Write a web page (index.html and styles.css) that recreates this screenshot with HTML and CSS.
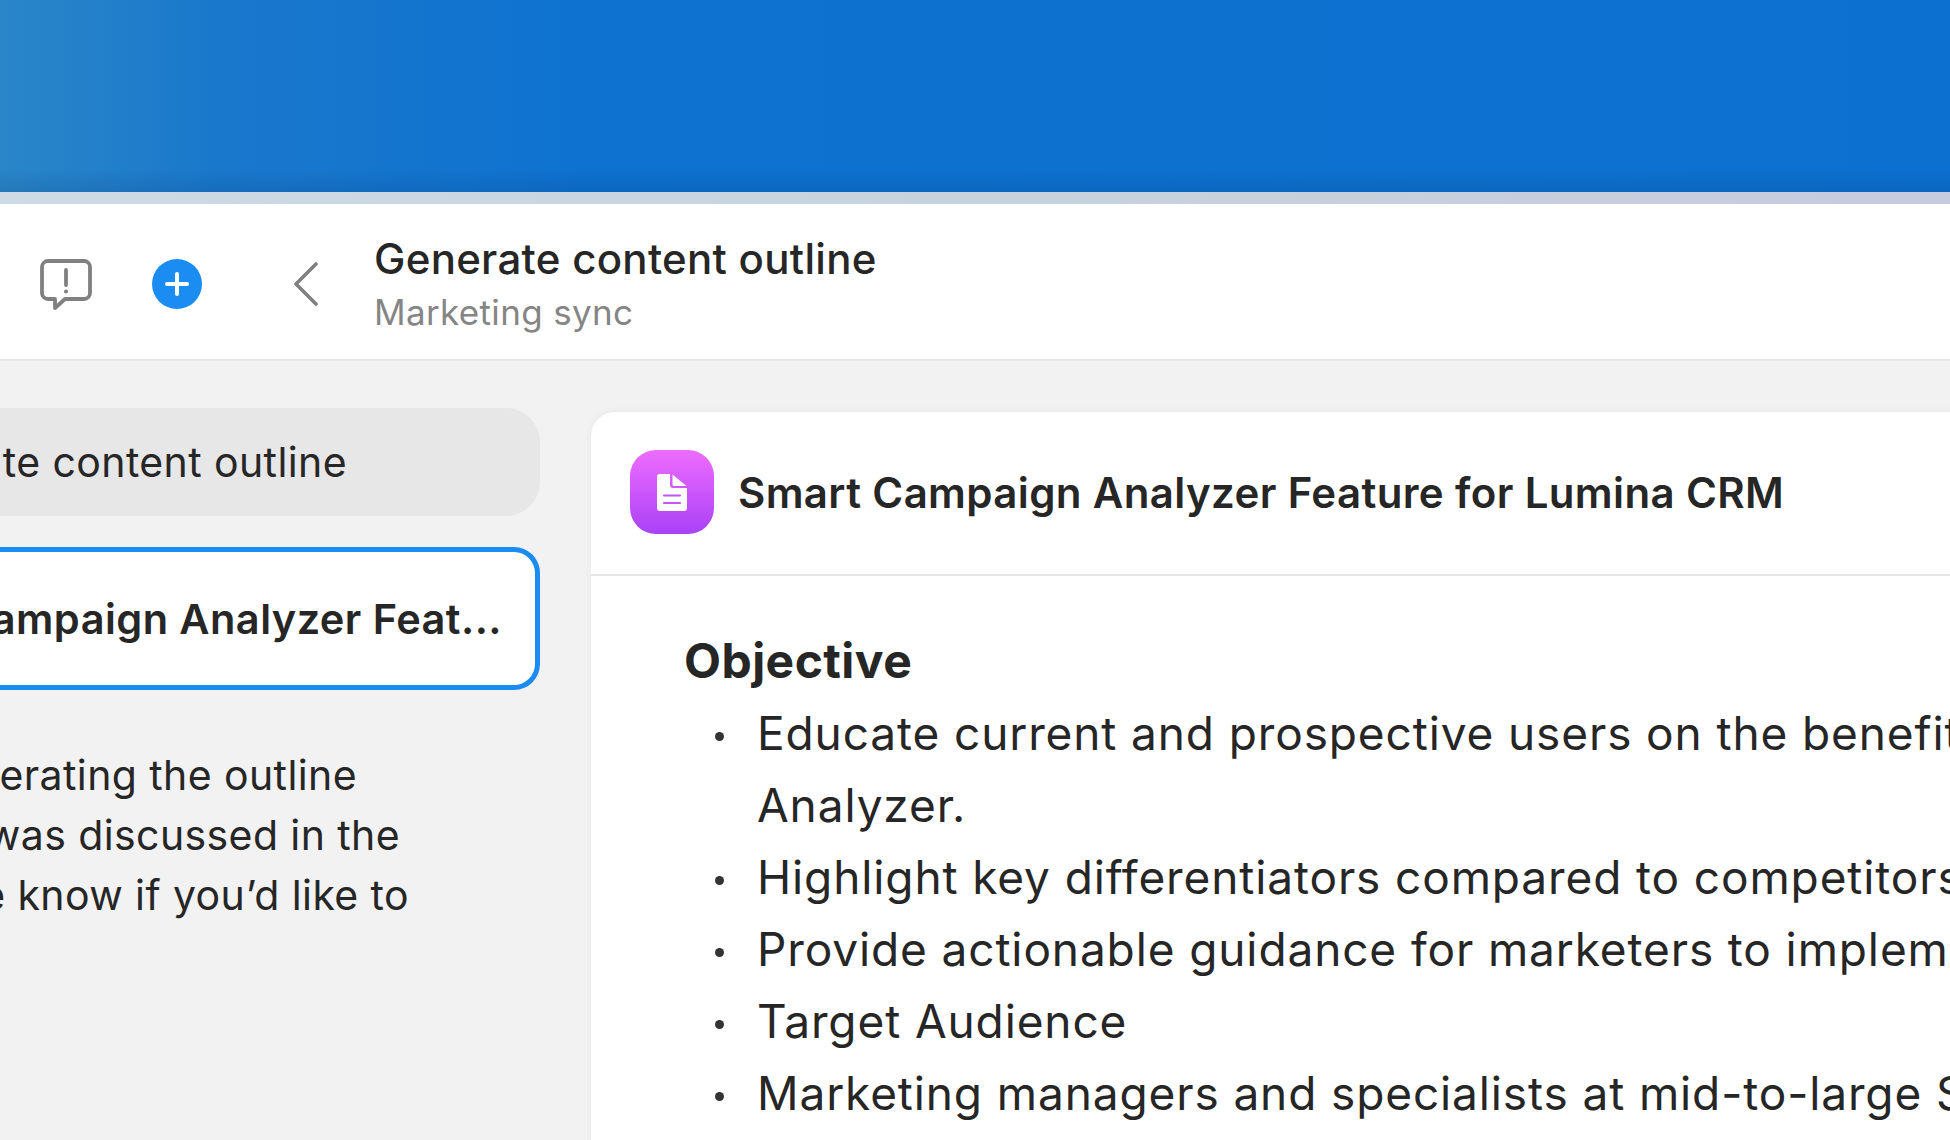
FILE: index.html
```html
<!DOCTYPE html>
<html lang="en">
<head>
<meta charset="utf-8">
<title>Generate content outline</title>
<link rel="stylesheet" href="styles.css">
</head>
<body>
<div class="hero"></div>
<div class="band"></div>
<header class="topbar">
  <svg class="ic-feedback" viewBox="0 0 54 54" width="54" height="54" fill="none" stroke="#808080" stroke-width="3.8" stroke-linejoin="round" stroke-linecap="round">
    <path d="M9 3h36a6 6 0 0 1 6 6v26a6 6 0 0 1-6 6H26l-10 9v-9H9a6 6 0 0 1-6-6V9a6 6 0 0 1 6-6z"/>
    <path d="M27 12v15"/>
    <circle cx="27" cy="33.5" r="1.2" fill="#808080" stroke-width="1.6"/>
  </svg>
  <svg class="ic-plus" viewBox="0 0 50 50" width="50" height="50">
    <circle cx="25" cy="25" r="25" fill="#1a8cf2"/>
    <path d="M25 15v20M15 25h20" stroke="#fff" stroke-width="4" stroke-linecap="round"/>
  </svg>
  <svg class="ic-back" viewBox="0 0 26 44" width="26" height="44" fill="none" stroke="#808080" stroke-width="3.6" stroke-linecap="round" stroke-linejoin="round">
    <path d="M23 2 3 22l20 20"/>
  </svg>
  <div class="titles">
    <div class="title">Generate content outline</div>
    <div class="subtitle">Marketing sync</div>
  </div>
</header>
<main class="workspace">
  <aside class="chat">
    <div class="pill"><span>Generate content outline</span></div>
    <div class="doc-link"><span>Smart Campaign Analyzer Feat...</span></div>
    <div class="reply">
      <div class="reply-line line-a"><span>I’ve finished generating the outline</span></div>
      <div class="reply-line line-b"><span>based on what was discussed in the</span></div>
      <div class="reply-line"><span>meeting. Please let me know if you’d like to</span></div>
    </div>
  </aside>
  <section class="doc">
    <div class="doc-head">
      <div class="doc-icon">
        <svg viewBox="0 0 30 37" width="30" height="37">
          <path d="M3 0h10v10.5a3.5 3.5 0 0 0 3.5 3.5H30v20a3 3 0 0 1-3 3H3a3 3 0 0 1-3-3V3a3 3 0 0 1 3-3z" fill="#fff"/>
          <path d="M15.5.5 29.5 12H17a1.5 1.5 0 0 1-1.5-1.5z" fill="#fff"/>
          <path d="M7 21.5h16M7 29h16" stroke="#c455f5" stroke-width="2.2" stroke-linecap="round"/>
        </svg>
      </div>
      <h1 class="doc-title">Smart Campaign Analyzer Feature for Lumina CRM</h1>
    </div>
    <div class="doc-body">
      <h2 class="section">Objective</h2>
      <ul class="points">
        <li>Educate current and prospective users on the benefits of the Smart Campaign<br>Analyzer.</li>
        <li>Highlight key differentiators compared to competitors.</li>
        <li>Provide actionable guidance for marketers to implement campaigns.</li>
        <li>Target Audience</li>
        <li>Marketing managers and specialists at mid-to-large SaaS companies.</li>
      </ul>
    </div>
  </section>
</main>
</body>
</html>
```
FILE: styles.css
```css
* { box-sizing: border-box; }
html, body { margin: 0; padding: 0; }
body {
  width: 1950px;
  height: 1140px;
  overflow: hidden;
  background: #f2f2f2;
  color: #262626;
  font-family: Inter, "Noto Sans", sans-serif;
}
.hero {
  height: 192px;
  background:
    linear-gradient(180deg, rgba(0,40,90,0) 88%, rgba(0,40,90,.14) 100%),
    linear-gradient(90deg, #2a86c8 0%, #1a78cc 11%, #0e72d0 30%, #0c70d0 100%);
}
.band {
  height: 12px;
  background: linear-gradient(90deg, #cfdbe4 0%, #c6d3dc 50%, #c6cbdf 100%);
}
.topbar {
  height: 157px;
  background: #fff;
  border-bottom: 2px solid #e6e6e6;
  display: flex;
  align-items: center;
  padding: 6px 0 0 39px;
}
.ic-plus { margin: -2px 0 0 59px; }
.ic-back { margin: -2px 0 0 91px; }
.titles { margin-left: 55px; }
.title { font-size: 42px; line-height: 54px; font-weight: 500; letter-spacing: .28px; }
.subtitle { font-size: 35px; line-height: 52px; color: #858585; letter-spacing: .35px; }
.workspace {
  display: flex;
  align-items: flex-start;
  padding-top: 47px;
}
.chat {
  width: 591px;
  flex: none;
}
.pill {
  width: 540px;
  height: 108px;
  border-radius: 0 34px 34px 0;
  background: #e7e7e7;
  display: flex;
  align-items: center;
  justify-content: flex-end;
  padding-right: 193px;
  font-size: 41px;
  letter-spacing: .4px;
  white-space: nowrap;
}
.doc-link {
  margin-top: 31px;
  width: 540px;
  height: 143px;
  border: 5px solid #1a8cf2;
  border-left: 0;
  border-radius: 0 26px 26px 0;
  background: #fff;
  display: flex;
  align-items: center;
  justify-content: flex-end;
  padding-right: 33px;
  font-size: 41.5px;
  font-weight: 600;
  white-space: nowrap;
  letter-spacing: .45px;
}
.reply {
  margin-top: 55px;
  width: 409px;
  font-size: 41px;
  line-height: 60px;
  letter-spacing: .4px;
  white-space: nowrap;
}
.reply-line { display: flex; justify-content: flex-end; }
.line-a { padding-right: 52px; }
.line-b { padding-right: 9px; }
.doc {
  flex: none;
  width: 1500px;
  height: 800px;
  margin-top: 4px;
  background: #fff;
  border-top-left-radius: 24px;
  box-shadow: 0 0 8px rgba(0,0,0,.05);
}
.doc-head {
  height: 164px;
  border-bottom: 2px solid #e6e6e6;
  display: flex;
  align-items: center;
  padding: 0 0 2px 39px;
}
.doc-icon {
  width: 84px;
  height: 84px;
  border-radius: 26px;
  background: linear-gradient(180deg, #ee6cff 0%, #a942f6 100%);
  display: flex;
  align-items: center;
  justify-content: center;
}
.doc-title { margin: 0 0 0 24px; font-size: 42px; font-weight: 600; letter-spacing: .37px; white-space: nowrap; }
.doc-body { padding: 49px 0 0 93px; }
.section { margin: 0; font-size: 48px; line-height: 72px; font-weight: 700; letter-spacing: .45px; }
.points {
  list-style: none;
  margin: 0;
  padding: 0 0 0 31px;
  font-size: 46px;
  line-height: 72px;
  white-space: nowrap;
  letter-spacing: .88px;
}
.points li { display: flex; }
.points li::before {
  content: "";
  flex: none;
  width: 9px;
  height: 9px;
  margin: 35px 33px 0 0;
  border-radius: 50%;
  background: #333;
}
```
